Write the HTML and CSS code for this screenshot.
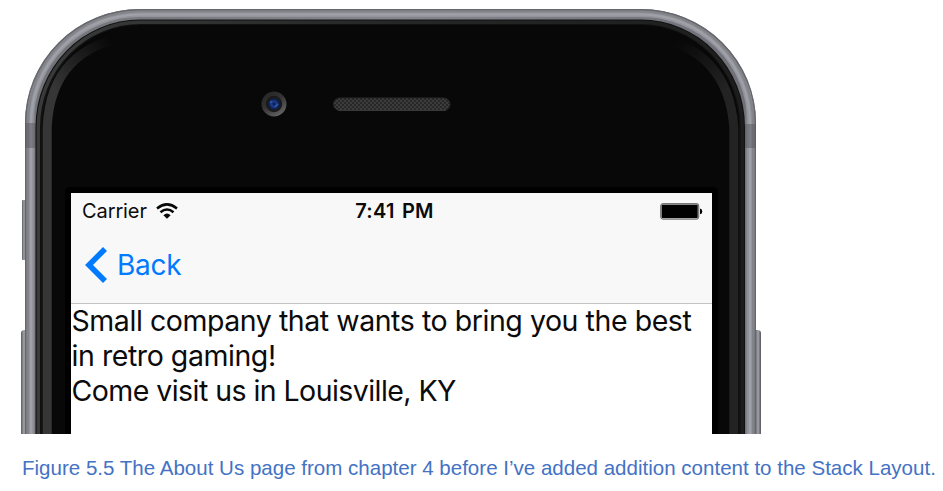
FILE: index.html
```
<!DOCTYPE html>
<html lang="en">
<head>
<meta charset="utf-8">
<title>Figure 5.5</title>
<link rel="stylesheet" href="styles.css">
</head>
<body>
<figure class="figure">
  <div class="phone">
    <svg class="phone-body" viewBox="0 0 943 434" aria-hidden="true">
      <defs>
        <linearGradient id="rail" x1="25" x2="756" y1="0" y2="0" gradientUnits="userSpaceOnUse">
          <stop offset="0" stop-color="#606168"/><stop offset=".004" stop-color="#85868d"/>
          <stop offset=".009" stop-color="#a0a1a8"/><stop offset=".014" stop-color="#73747a"/>
          <stop offset=".5" stop-color="#85868d"/>
          <stop offset=".985" stop-color="#707178"/><stop offset=".991" stop-color="#a0a1a8"/>
          <stop offset=".997" stop-color="#85868d"/><stop offset="1" stop-color="#606168"/>
        </linearGradient>
        <linearGradient id="fadeL" x1="110" y1="40" x2="55" y2="90" gradientUnits="userSpaceOnUse">
          <stop offset="0" stop-color="#080808"/><stop offset="1" stop-color="#353635"/>
        </linearGradient>
        <linearGradient id="fadeR" x1="680" y1="40" x2="725" y2="90" gradientUnits="userSpaceOnUse">
          <stop offset="0" stop-color="#080808"/><stop offset="1" stop-color="#232323"/>
        </linearGradient>
        <linearGradient id="rim" x1="35" x2="745" y1="0" y2="0" gradientUnits="userSpaceOnUse">
          <stop offset="0" stop-color="#3a3a3a"/><stop offset=".5" stop-color="#252826"/><stop offset="1" stop-color="#1d1d1d"/>
        </linearGradient>
        <linearGradient id="key" x1="0" x2="1" y1="0" y2="0">
          <stop offset="0" stop-color="#5b5c61"/><stop offset=".5" stop-color="#a3a4ab"/><stop offset="1" stop-color="#55565b"/>
        </linearGradient>
        <linearGradient id="lensRing" x1="0" y1="0" x2=".65" y2="1">
          <stop offset="0" stop-color="#222"/><stop offset=".5" stop-color="#333"/><stop offset="1" stop-color="#626262"/>
        </linearGradient>
        <radialGradient id="lens">
          <stop offset="0" stop-color="#0b1745"/><stop offset=".4" stop-color="#1b3e91"/>
          <stop offset=".65" stop-color="#10265e"/><stop offset="1" stop-color="#17181c"/>
        </radialGradient>
        <pattern id="mesh" width="4" height="4" patternUnits="userSpaceOnUse">
          <rect width="4" height="4" fill="#272727"/><rect width="2" height="2" fill="#3c3c3c"/><rect x="2" y="2" width="2" height="2" fill="#3c3c3c"/>
        </pattern>
      </defs>
      <rect x="22" y="200" width="4" height="60" rx="1" fill="url(#key)"/>
      <path d="M21 434V333Q21 330 25 330H27V434Z" fill="url(#key)"/>
      <path d="M761 434V333Q761 330 757 330H755V434Z" fill="url(#key)"/>
      <path d="M25 434V123A115 114 0 0 1 140 9H641A115 114 0 0 1 756 123V434Z" fill="url(#rail)"/>
      <g fill="none">
        <path d="M25.7 434V123A114.3 113.3 0 0 1 140 9.7H641A114.3 113.3 0 0 1 755.3 123V434" stroke="#66676d" stroke-width="1.4"/>
        <path d="M28 434V123A112 111 0 0 1 140 12H641A112 111 0 0 1 753 123V434" stroke="#83848a" stroke-width="3"/>
        <path d="M31.3 434V123A108.7 108.3 0 0 1 140 14.7H641A108.7 108.3 0 0 1 749.7 123V434" stroke="#94959c" stroke-width="4.5"/>
        <path d="M31 434V123A109 108.6 0 0 1 140 14.4H641A109 108.6 0 0 1 750 123V434" stroke="#a0a1a8" stroke-width="2"/>
      </g>
      <path d="M25 123H36V148H25ZM745 124H756V148H745Z" fill="#55565b" opacity=".5"/>
      <path d="M35.5 434V127A104.5 107.5 0 0 1 140 19.5H641A104 107.5 0 0 1 745 127V434Z" fill="#111"/>
      <path d="M38.3 434V127A101.7 105 0 0 1 140 22.2H641A101.3 105 0 0 1 742.3 127V434" fill="none" stroke="url(#rim)" stroke-width="3.4"/>
      <path d="M42.5 434V127A98 101 0 0 1 140 25H641A98 101 0 0 1 739 127V434Z" fill="#080808"/>
      <path d="M47.2 434V127Q51 47 132 36" fill="none" stroke="url(#fadeL)" stroke-width="9"/>
      <path d="M733.8 434V127Q728 49 650 36" fill="none" stroke="url(#fadeR)" stroke-width="9"/>
      <rect x="65" y="187" width="653" height="260" rx="5" fill="#000"/>
      <circle cx="274" cy="104" r="12.5" fill="url(#lensRing)"/>
      <circle cx="274" cy="104" r="8.2" fill="#1b1b1d"/>
      <circle cx="274" cy="104" r="6.5" fill="url(#lens)"/>
      <path d="M270 103l2-2M275 107l3-3" stroke="#2d5ab4" stroke-width="1.5"/>
      <rect x="333.5" y="98" width="116.5" height="12.5" rx="6.2" fill="url(#mesh)" stroke="#262626"/>
      <path d="M338 110.3H446" stroke="#3c3c3c" stroke-width="1"/>
    </svg>
    <div class="screen">
      <header class="topbar">
        <div class="status">
          <span class="carrier"><span class="carrier-name">Carrier</span>
            <svg class="wifi" viewBox="0 0 22 16" aria-hidden="true">
              <g fill="none" stroke="#080808" stroke-width="2.5"><path d="M1 5.4Q11-2.6 21 5.4"/><path d="M4.5 9.2Q11 3.8 17.5 9.2"/></g>
              <path d="M7.4 12.2Q11 9 14.6 12.2L11 15.7Z" fill="#080808"/>
            </svg>
          </span>
          <span class="time">7:41 PM</span>
          <svg class="battery" viewBox="0 0 43 17" aria-hidden="true">
            <rect x=".7" y=".7" width="38" height="15.4" rx="2.5" fill="#ccc" stroke="#777" stroke-width="1.2"/>
            <rect x="1.7" y="1.7" width="36" height="13.4" rx="1" fill="#000"/>
            <path d="M40 5.5Q42.3 6 42.3 8.4T40 11.3Z" fill="#000"/>
          </svg>
        </div>
        <a class="back">
          <svg class="chevron" viewBox="0 0 22 36" aria-hidden="true"><path d="M20 2L4 18L20 34" fill="none" stroke="#007aff" stroke-width="5.6"/></svg>
          <span class="back-label">Back</span>
        </a>
      </header>
      <main class="content">
        <p class="line">Small company that wants to bring you the best<br>in retro gaming!</p>
        <p class="line line-visit">Come visit us in Louisville, KY</p>
      </main>
    </div>
  </div>
  <figcaption class="caption">Figure 5.5 The About Us page from chapter 4 before I’ve added addition content to the Stack Layout.</figcaption>
</figure>
</body>
</html>
```
FILE: styles.css
```
body { margin: 0; background: #fff; overflow: hidden; }
.figure { margin: 0; width: 943px; height: 491px; }
.phone { position: relative; box-sizing: border-box; height: 434px; padding: 193px 231px 0 71px; overflow: hidden; }
.phone-body { position: absolute; inset: 0; width: 943px; height: 434px; }
.screen { position: relative; height: 241px; background: #fff; font-family: Inter, "Liberation Sans", sans-serif; color: #0b0b0b; }
.topbar { box-sizing: border-box; height: 111px; background: #f8f8f8; border-bottom: 1px solid #c3c3c3; }
.status { display: grid; grid-template-columns: 1fr auto 1fr; align-items: center; height: 36px; padding: 0 9px 0 11px; font-size: 20px; line-height: 36px; }
.carrier { display: flex; align-items: center; gap: 9px; }
.carrier-name { letter-spacing: -0.1px; }
.wifi { width: 22px; height: 16px; }
.time { margin-left: 4px; font-weight: 580; letter-spacing: 0.25px; word-spacing: 2px; }
.battery { width: 43px; height: 17px; justify-self: end; }
.back { display: flex; align-items: center; gap: 10px; height: 72px; padding-left: 14px; color: #007aff; }
.chevron { width: 22px; height: 36px; }
.back-label { font-size: 28px; letter-spacing: -0.3px; }
.content { margin-top: -1px; font-size: 28.5px; line-height: 35px; letter-spacing: -0.44px; }
.line { margin: 0; padding-left: 0.5px; white-space: nowrap; }
.line-visit { letter-spacing: -0.55px; }
.caption { padding: 22px 0 0 22px; font: 20.54px/24px "Liberation Sans", Arial, sans-serif; color: #4472c4; white-space: nowrap; }
```
